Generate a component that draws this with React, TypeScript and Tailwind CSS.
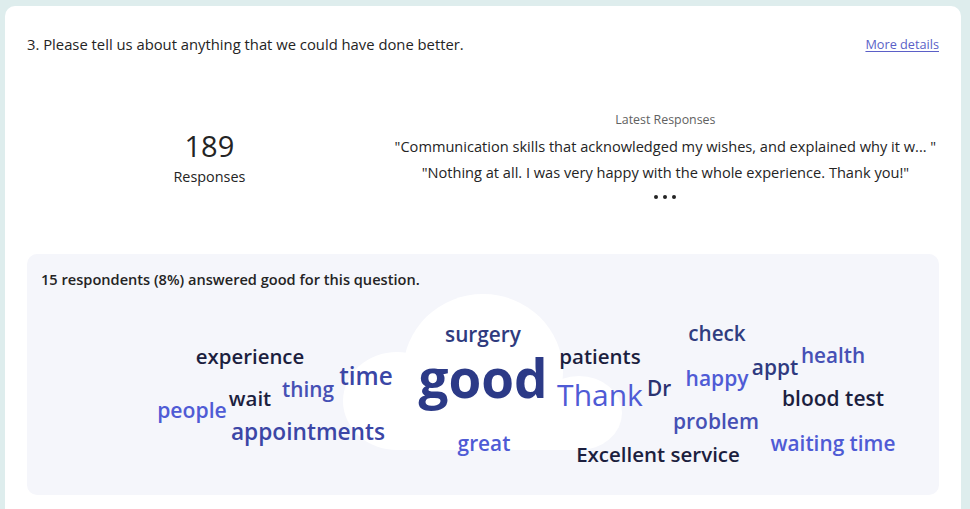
import React from "react";

type Word = { t: string; x: number; y: number; cls: string };

const words: Word[] = [
  { t: "surgery", x: 483 - 27, y: 80, cls: "text-[20.8px] leading-none font-semibold text-[#2f3b7e]" },
  { t: "good", x: 456, y: 124, cls: "text-[53px] leading-[40px] font-bold text-[#2c3a87]" },
  { t: "great", x: 457, y: 189, cls: "text-[20.8px] leading-none font-semibold text-[#4f5bd5]" },
  { t: "experience", x: 223, y: 102, cls: "text-[20.4px] leading-none font-semibold text-[#1c1f3f]" },
  { t: "time", x: 339, y: 122, cls: "text-[24.3px] leading-none font-semibold text-[#3b46a6]" },
  { t: "thing", x: 281, y: 135, cls: "text-[20.8px] leading-none font-semibold text-[#4650b5]" },
  { t: "wait", x: 223, y: 144, cls: "text-[20.5px] leading-none font-semibold text-[#1c1f3f]" },
  { t: "people", x: 165, y: 156, cls: "text-[21.2px] leading-none font-semibold text-[#4f5bd5]" },
  { t: "appointments", x: 281, y: 178, cls: "text-[22.7px] leading-none font-semibold text-[#3b46a6]" },
  { t: "patients", x: 573, y: 102, cls: "text-[20.5px] leading-none font-semibold text-[#1c1f3f]" },
  { t: "Thank", x: 573, y: 141, cls: "text-[30px] leading-none font-normal text-[#4f5bd5]" },
  { t: "Dr", x: 632, y: 134, cls: "text-[20.8px] leading-none font-semibold text-[#2a3270]" },
  { t: "check", x: 690, y: 79, cls: "text-[20.7px] leading-none font-semibold text-[#303d80]" },
  { t: "happy", x: 690, y: 124, cls: "text-[21px] leading-none font-semibold text-[#4f5bd5]" },
  { t: "appt", x: 748, y: 113, cls: "text-[20.9px] leading-none font-semibold text-[#2f3a80]" },
  { t: "health", x: 806, y: 101, cls: "text-[20.7px] leading-none font-semibold text-[#4650b5]" },
  { t: "blood test", x: 806, y: 144, cls: "text-[21px] leading-none font-semibold text-[#1c1f3f]" },
  { t: "problem", x: 689, y: 167, cls: "text-[21px] leading-none font-semibold text-[#4650b5]" },
  { t: "waiting time", x: 806, y: 189, cls: "text-[20.8px] leading-none font-semibold text-[#4f5bd5]" },
  { t: "Excellent service", x: 631, y: 200, cls: "text-[20.5px] leading-none font-semibold text-[#1c1f3f]" },
];

export default function App() {
  return (
    <div
      className="min-h-screen bg-[#deeded] pt-[6px] pl-[5px] pr-[9px] text-[#242424]"
      style={{ fontFamily: '"Open Sans", "Noto Sans", sans-serif' }}
    >
      <div className="min-h-[503px] rounded-t-[10px] bg-white px-[22px] pt-[28px] pb-[20px]">
        <div className="flex items-center justify-between leading-[20px]">
          <div className="text-[14.8px]">3. Please tell us about anything that we could have done better.</div>
          <a className="text-[12.7px] text-[#5b5fc7] underline underline-offset-2" href="#">
            More details
          </a>
        </div>

        <div className="mt-[56px] mb-[45px] grid grid-cols-[2fr_3fr] items-start">
          <div className="flex flex-col items-center pt-[18px]">
            <div className="text-[29px] leading-[36px]">189</div>
            <div className="mt-[3px] text-[14.4px] leading-[20px]">Responses</div>
          </div>
          <div className="flex flex-col items-center">
            <div className="text-[12.4px] leading-[20px] text-[#616161]">Latest Responses</div>
            <div className="mt-[3px] text-[14.6px] leading-[26px]">
              "Communication skills that acknowledged my wishes, and explained why it w... "
            </div>
            <div className="text-[14.6px] leading-[26px]">
              "Nothing at all. I was very happy with the whole experience. Thank you!"
            </div>
            <div className="flex h-[24px] items-center gap-[5px]">
              <span className="h-[4px] w-[4px] rounded-full bg-[#242424]" />
              <span className="h-[4px] w-[4px] rounded-full bg-[#242424]" />
              <span className="h-[4px] w-[4px] rounded-full bg-[#242424]" />
            </div>
          </div>
        </div>

        <div className="relative h-[241px] rounded-[10px] bg-[#f5f6fb]">
          <svg
            className="absolute inset-0"
            width="912"
            height="241"
            viewBox="0 0 912 241"
            aria-hidden="true"
          >
            <g fill="#ffffff">
              <ellipse cx="456" cy="118" rx="80" ry="78" />
              <ellipse cx="370" cy="147" rx="54" ry="49" />
              <ellipse cx="552" cy="159" rx="43" ry="37" />
              <rect x="370" y="130" width="182" height="66" />
            </g>
          </svg>
          <div className="relative px-[14px] pt-[15px] text-[14.6px] font-semibold leading-[20px]">
            15 respondents (8%) answered good for this question.
          </div>
          {words.map((w) => (
            <span
              key={w.t}
              className={`absolute -translate-x-1/2 -translate-y-1/2 whitespace-nowrap ${w.cls}`}
              style={{ left: w.x, top: w.y }}
            >
              {w.t}
            </span>
          ))}
        </div>
      </div>
    </div>
  );
}
